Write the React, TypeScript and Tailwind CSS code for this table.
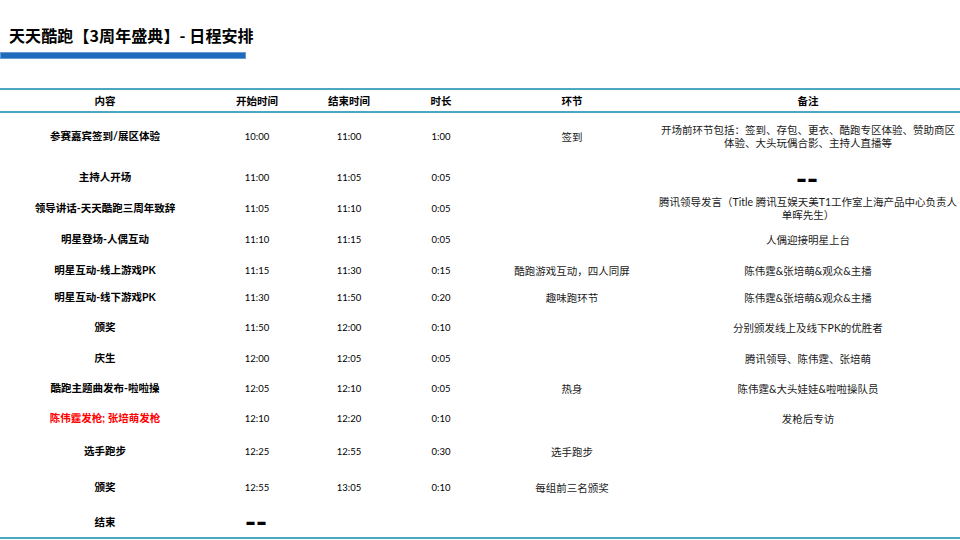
import React from "react";

type Row = {
  h: string;
  name: string;
  red?: boolean;
  start?: string;
  end?: string;
  dur?: string;
  startDash?: boolean;
  seg?: string;
  note?: React.ReactNode;
};

const CJK = "font-['Noto_Sans_CJK_SC',sans-serif]";
const NUM = "font-['Lato','Noto_Sans_CJK_SC',sans-serif] text-[9.5px]";

function Dash() {
  return (
    <span className="inline-block text-[9px] leading-[12px] tracking-[2px] font-black text-black scale-y-[3] font-['DejaVu_Sans',sans-serif]">
      ——
    </span>
  );
}

const rows: Row[] = [
  {
    h: "h-[48px]",
    name: "参赛嘉宾签到/展区体验",
    start: "10:00",
    end: "11:00",
    dur: "1:00",
    seg: "签到",
    note: (
      <>
        开场前环节包括：签到、存包、更衣、酷跑专区体验、赞助商区
        <br />
        体验、大头玩偶合影、主持人直播等
      </>
    ),
  },
  { h: "h-[34px]", name: "主持人开场", start: "11:00", end: "11:05", dur: "0:05", note: <Dash /> },
  {
    h: "h-[28px]",
    name: "领导讲话-天天酷跑三周年致辞",
    start: "11:05",
    end: "11:10",
    dur: "0:05",
    note: (
      <>
        腾讯领导发言（Title 腾讯互娱天美T1工作室上海产品中心负责人
        <br />
        单晖先生）
      </>
    ),
  },
  { h: "h-[34px]", name: "明星登场-人偶互动", start: "11:10", end: "11:15", dur: "0:05", note: "人偶迎接明星上台" },
  {
    h: "h-[28px]",
    name: "明星互动-线上游戏PK",
    start: "11:15",
    end: "11:30",
    dur: "0:15",
    seg: "酷跑游戏互动，四人同屏",
    note: "陈伟霆&张培萌&观众&主播",
  },
  {
    h: "h-[26px]",
    name: "明星互动-线下游戏PK",
    start: "11:30",
    end: "11:50",
    dur: "0:20",
    seg: "趣味跑环节",
    note: "陈伟霆&张培萌&观众&主播",
  },
  { h: "h-[34px]", name: "颁奖", start: "11:50", end: "12:00", dur: "0:10", note: "分别颁发线上及线下PK的优胜者" },
  { h: "h-[28px]", name: "庆生", start: "12:00", end: "12:05", dur: "0:05", note: "腾讯领导、陈伟霆、张培萌" },
  {
    h: "h-[32px]",
    name: "酷跑主题曲发布-啦啦操",
    start: "12:05",
    end: "12:10",
    dur: "0:05",
    seg: "热身",
    note: "陈伟霆&大头娃娃&啦啦操队员",
  },
  { h: "h-[28px]", name: "陈伟霆发枪; 张培萌发枪", red: true, start: "12:10", end: "12:20", dur: "0:10", note: "发枪后专访" },
  { h: "h-[38px]", name: "选手跑步", start: "12:25", end: "12:55", dur: "0:30", seg: "选手跑步" },
  { h: "h-[34px]", name: "颁奖", start: "12:55", end: "13:05", dur: "0:10", seg: "每组前三名颁奖" },
  { h: "h-[32px] pt-[3px]", name: "结束", startDash: true },
];

export default function App() {
  return (
    <div className={`w-[960px] h-[540px] bg-white overflow-hidden ${CJK}`}>
      <div className="pt-[23px] pl-[9px] h-[47px] leading-[24px] text-[16px] font-bold text-black whitespace-nowrap tracking-[0.1px]">
        天天酷跑【3周年盛典】- 日程安排
      </div>
      <div className="mt-[5px] w-[246px] h-[7px] bg-[#1f6bbd] border border-[#6a98d0]" />
      <div className="mt-[29px] w-[960px]">
        <div className="grid grid-cols-[210px_94px_90px_94px_168px_304px] h-[25px] items-center border-t-2 border-b-2 border-[#4ba7c2] text-[10.5px] font-bold text-black text-center">
          <div>内容</div>
          <div>开始时间</div>
          <div>结束时间</div>
          <div>时长</div>
          <div>环节</div>
          <div>备注</div>
        </div>
        {rows.map((r, i) => (
          <div
            key={i}
            className={`grid grid-cols-[210px_94px_90px_94px_168px_304px] items-center text-center ${r.h}`}
          >
            <div
              className={`text-[10.5px] font-bold whitespace-nowrap font-['Lato','Noto_Sans_CJK_SC',sans-serif] ${
                r.red ? "text-[#ff0000]" : "text-black"
              }`}
            >
              {r.name}
            </div>
            <div className={`${NUM} text-black`}>{r.startDash ? <Dash /> : r.start}</div>
            <div className={`${NUM} text-black`}>{r.end}</div>
            <div className={`${NUM} text-black`}>{r.dur}</div>
            <div className="text-[10.5px] text-[#1a1a1a] whitespace-nowrap">{r.seg}</div>
            <div className="text-[10.5px] leading-[12.7px] text-[#1a1a1a] whitespace-nowrap font-['Lato','Noto_Sans_CJK_SC',sans-serif]">
              {r.note}
            </div>
          </div>
        ))}
        <div className="h-[2px] bg-[#4ba7c2]" />
      </div>
    </div>
  );
}
